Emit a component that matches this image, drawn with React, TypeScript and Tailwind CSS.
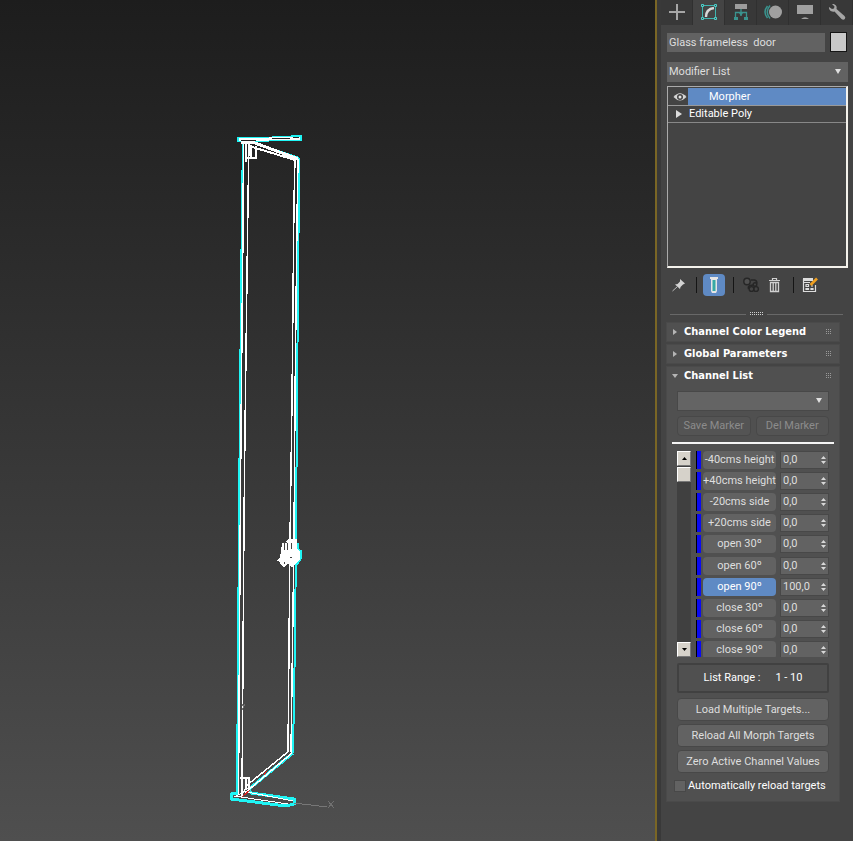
import type { ReactNode } from 'react';
import clsx from 'clsx';

type Channel = { name: string; value: string; active?: boolean };

const CHANNELS: Channel[] = [
  { name: '-40cms height', value: '0,0' },
  { name: '+40cms height', value: '0,0' },
  { name: '-20cms side', value: '0,0' },
  { name: '+20cms side', value: '0,0' },
  { name: 'open 30º', value: '0,0' },
  { name: 'open 60º', value: '0,0' },
  { name: 'open 90º', value: '100,0', active: true },
  { name: 'close 30º', value: '0,0' },
  { name: 'close 60º', value: '0,0' },
  { name: 'close 90º', value: '0,0' },
];

// Wireframe door, drawn in viewport units. Cyan is the selection outline.
function Viewport() {
  return (
    <main aria-label="Viewport" className="min-w-0 flex-1 overflow-hidden bg-linear-to-b from-[#1d1d1d] to-[#4f4f4f]">
      <svg viewBox="0 0 655 841" preserveAspectRatio="xMinYMin meet" className="block w-full" fill="none" shapeRendering="crispEdges">
        <g stroke="#1ff5f5" strokeWidth="2">
          <path d="M243 141 L242 200 L240 400 L239 520 L237 796" />
          <path d="M299 158 L299 180 L297 400 L296 540 L295 640 L293 753" />
          <path d="M252 142 L299 158" />
          <path d="M238 138 L262 138 L301 136 V140 L238 141z" />
          <path d="M293 753 L249 789 L251 793 L294 799 L294 804 L286 806 L231 799 L231 794 L237 793" strokeWidth="3" />
        </g>
        <g stroke="#fff">
          <path d="M243.500 141 L243 230 L241 430 L240 560 L238.500 795" strokeWidth="1.5" />
          <path d="M249 143 L248 200 L245 430 L244 520 L242 796" strokeWidth="1.5" />
          <path d="M295 159 L294 200 L292 400 L290 540 L288 751" strokeWidth="1.5" />
          <path d="M298 159 L297 220 L295 400 L294 540 L291 752" strokeWidth="1.5" />
          <path d="M241 142 L255 143 L298 159" strokeWidth="3" />
          <path d="M249 146 L295 160" strokeWidth="2" />
          <path d="M239 140 L300 138" strokeWidth="3" />
          <path d="M251 145 V158 M256 146 V158 H247 M246 144 V162" strokeWidth="1.5" />
          <path d="M289 751 L246 786 M292 753 L245 793" strokeWidth="1.5" />
          <path d="M242 791 L293 801 M234 796 L288 804 M234 797 L244 792" strokeWidth="1" />
          <path d="M240 778 H249 V788 L244 790 M246 778 V790 M242 776 V797" strokeWidth="1.5" />
        </g>
        <path d="M241 141 L256 140 M272 139 L290 138 M293 137 L299 137" stroke="#222" />
        <path d="M295 544 H298 V550 L301 551 V558 L298 563 L295 565" stroke="#1ff5f5" strokeWidth="2" />
        <path d="M281 551 L282 543 L287 541 L288 539 H297 V549 L300 551 V559 L296 564 L292 567 L288 564 L284 567 L281 565 L280 562 L277 561 L280 557 Z" fill="#fff" />
        <path d="M284 543 V550 M287 543 V550 M291 543 V549 M283 543 L287 542 M284 562 V564 M290 557 H292" stroke="#444" />
        <path d="M242 797 L250 790 M264 775 L267 771" stroke="#e02020" />
        <path d="M294 803 L327 807" stroke="#777" />
        <path d="M328 801 L334 808 M334 801 L328 808 M242 704 L244 707 M245 704 L242 710" stroke="#707070" />
      </svg>
    </main>
  );
}

const TABS: { label: string; icon: ReactNode; active?: boolean }[] = [
  { label: 'Create', icon: <path d="M12 4 V20 M4 12 H20" stroke="#a6a6a6" strokeWidth="2" /> },
  {
    label: 'Modify',
    active: true,
    icon: (
      <>
        <path d="M7 5.5 H17 M7 18.5 H17 M5.5 7 V17 M18.5 7 V17" stroke="#3fb5b0" />
        <path d="M4.5 4.5 h2 v2 h-2z M17.5 4.5 h2 v2 h-2z M4.5 17.5 h2 v2 h-2z M17.5 17.5 h2 v2 h-2z" stroke="#4cd0ca" />
        <path d="M9 17 Q9 9 17 8" stroke="#d8d8d8" strokeWidth="2.4" />
      </>
    ),
  },
  {
    label: 'Hierarchy',
    icon: (
      <>
        <path d="M6 4 H18 V9 H6z" fill="#9c9c9c" />
        <path d="M12 9 V16 M6.500 17 V12.500 H17.500 V17" stroke="#3a948f" strokeWidth="1.3" />
        <path d="M5 17 h4 v3 h-4z M15 17 h4 v3 h-4z M10 13 h4 l-2 3z" fill="#3a948f" />
      </>
    ),
  },
  {
    label: 'Motion',
    icon: (
      <>
        <circle cx="14.5" cy="12" r="6.5" fill="#a0a0a0" />
        <path d="M9 5.500 Q3.500 12 9 18.500 M6.500 6 Q1.500 12 6.500 18" stroke="#3a948f" strokeWidth="1.5" />
      </>
    ),
  },
  { label: 'Display', icon: <path d="M4 5 H20 V14 H4z M8 19 Q12 15.500 16 19z" fill="#a0a0a0" /> },
  {
    label: 'Utilities',
    icon: (
      <path
        d="M4 7 C3.500 10 6.500 12.500 9.500 11.500 L16.500 19 Q18.500 20.500 19.800 19 Q21 17.500 19.500 16 L11.500 9 C12.500 6 10 3.500 7 4 L9.500 6.500 L9 8.500 L7 9 Z"
        fill="#a6a6a6"
      />
    ),
  },
];

function PanelTabs() {
  return (
    <nav aria-label="Command panel" className="flex h-[25px] overflow-hidden bg-[#383838]">
      {TABS.map((tab) => (
        <button
          key={tab.label}
          type="button"
          aria-label={tab.label}
          className={clsx('flex w-8 shrink-0 justify-center border-r border-[#303030]', tab.active && 'bg-[#444]')}
        >
          <svg width="24" height="24" viewBox="0 0 24 24" fill="none">
            {tab.icon}
          </svg>
        </button>
      ))}
    </nav>
  );
}

function ModifierStack() {
  return (
    <ul className="h-[182px] border-t border-r-2 border-b-2 border-l border-t-[#aaa] border-r-[#f4f2ec] border-b-[#f4f2ec] border-l-[#aaa] pt-px text-white">
      <li className="flex h-[18px] border-b border-[#999]">
        <button type="button" aria-label="Toggle Morpher" className="flex w-5 items-center justify-center pl-1">
          <svg width="14" height="10" viewBox="0 0 14 10" fill="none">
            <path d="M.5 5 Q7 -2.500 13.500 5 Q7 12 .5 5z" fill="#d6d6d6" />
            <circle cx="7" cy="5" r="3" fill="#444" />
            <circle cx="7" cy="5" r="1.500" fill="#e5e5e5" />
          </svg>
        </button>
        <button type="button" className="flex flex-1 items-center bg-[#5f8ac4] pl-[21px]">
          Morpher
        </button>
      </li>
      <li className="flex h-[17px] items-center border-b border-[#888]">
        <button type="button" className="flex items-center">
          <span className="flex w-[21px] justify-center">
            <svg width="6" height="8" viewBox="0 0 6 8">
              <path d="M0 0 L6 4 L0 8z" fill="#ddd" />
            </svg>
          </span>
          Editable Poly
        </button>
      </li>
    </ul>
  );
}

function Divider() {
  return <span className="h-4 w-px bg-[#151515]" />;
}

function StackTools() {
  return (
    <div className="mt-[6px] flex h-[22px] items-center">
      <button type="button" aria-label="Pin stack" className="mr-2 ml-1">
        <svg width="17" height="16" viewBox="0 0 17 16" fill="none">
          <path d="M9 2 L14 6.500 L12 7.500 L9.500 10 L9 12 L4 7.500 L6.500 7 L9 4.500z" fill="#d2d2d2" />
          <path d="M6.500 9.500 L1.500 14" stroke="#bbb" />
        </svg>
      </button>
      <Divider />
      <button type="button" aria-label="Show end result" className="mr-2 ml-[6px] flex h-[22px] w-[22px] items-center justify-center rounded-sm bg-[#5f8ac4]">
        <svg width="10" height="18" viewBox="0 0 10 18">
          <path d="M1 1 H9 V3 H8 V15 L7 17 H3 L2 15 V3 H1z" fill="#e5e5e5" />
          <path d="M3.500 4 H6.500 V15 H3.500z" fill="#35aaa5" />
        </svg>
      </button>
      <Divider />
      <button type="button" aria-label="Make unique" className="ml-2">
        <svg width="18" height="18" viewBox="0 0 18 18" fill="none" stroke="#262626" strokeWidth="1.4">
          <circle cx="5" cy="5.5" r="3.200" fill="#505050" />
          <path d="M9 4 H12.500 Q15 4.500 15 7.500 M6.500 13 Q5.500 10.500 8 9.500 L11 9" />
          <circle cx="9.500" cy="13" r="2.400" />
          <circle cx="14" cy="13" r="2.400" />
          <circle cx="13" cy="8.500" r="1.800" />
        </svg>
      </button>
      <button type="button" aria-label="Remove modifier" className="ml-2">
        <svg width="13" height="16" viewBox="0 0 13 16" fill="none" stroke="#d0d0d0">
          <path d="M1 3.500 H12 M4.500 3 V1.500 H8.500 V3" strokeWidth="1.2" />
          <path d="M2.500 5.500 H10.500 V14.500 H2.500z M5.200 6 V14 M7.800 6 V14" strokeWidth="1.3" />
        </svg>
      </button>
      <span className="w-3" />
      <Divider />
      <button type="button" aria-label="Configure modifier sets" className="ml-[7px]">
        <svg width="18" height="18" viewBox="0 0 18 18" fill="none">
          <path d="M2 2 H12 V5 H2z" fill="#ddd" />
          <path d="M2.500 3 V15.500 H14.500 V9 M2.500 6.500 H9 M5 8.500 h2.500 v2 h-2.500z M5 12.500 h2.500 v1 h-2.500z M10 12.500 h2 v1 h-2z M10 10 h2" stroke="#ddd" strokeWidth="1.2" />
          <path d="M16 2.500 L9.500 9" stroke="#f0a020" strokeWidth="2.600" />
        </svg>
      </button>
    </div>
  );
}

function Grip() {
  return (
    <svg width="6" height="6" viewBox="0 0 6 6" fill="none" shapeRendering="crispEdges" aria-hidden="true">
      <path d="M0 .5 H6 M0 2.500 H6 M0 4.500 H6" stroke="#999" strokeDasharray="1 1" />
    </svg>
  );
}

function Rollout({ title, open = false, children }: { title: string; open?: boolean; children?: ReactNode }) {
  return (
    <section className="border border-[#4a4a4a] bg-[#505050]">
      <button type="button" aria-expanded={open} className="flex h-[18px] w-full items-center pr-[7px] pl-[5px] font-bold text-white">
        <svg width="6" height="6" viewBox="0 0 6 6" aria-hidden="true">
          <path d={open ? 'M0 1 H6 L3 5z' : 'M1 0 L5 3 L1 6z'} fill="#b5b5b5" />
        </svg>
        <span className="ml-[6px] flex-1 text-left font-['DejaVu_Sans_Condensed','Noto_Sans',sans-serif]">{title}</span>
        <Grip />
      </button>
      {children}
    </section>
  );
}

function Caret() {
  return (
    <svg width="6" height="5" viewBox="0 0 6 5" className="pointer-events-none absolute top-[7px] right-[7px]" aria-hidden="true">
      <path d="M0 0 H6 L3 5z" fill="#e0e0e0" />
    </svg>
  );
}

function ChannelRow({ name, value, active }: Channel) {
  return (
    <div className="flex h-[18px] shrink-0">
      <span className="w-[5px] border-l border-black bg-[#0b0bf0]" />
      <button
        type="button"
        className={clsx('ml-[2px] w-[73px] rounded-sm text-center whitespace-nowrap', active ? 'bg-[#5f8ac4] text-white' : 'bg-[#626262]')}
      >
        {name}
      </button>
      <label className="ml-1 flex min-w-0 flex-1 items-center border border-[#484848] bg-[#626262] pr-[2px]">
        <input aria-label={`${name} value`} defaultValue={value} className="w-0 min-w-0 flex-1 bg-transparent pl-[2px] outline-none" />
        <svg width="5" height="8" viewBox="0 0 5 8" aria-hidden="true">
          <path d="M0 3 L2.500 0 L5 3z M0 5 H5 L2.500 8z" fill="#d8d8d8" />
        </svg>
      </label>
    </div>
  );
}

function ScrollButton({ label, path }: { label: string; path: string }) {
  return (
    <button
      type="button"
      aria-label={label}
      className="flex h-[15px] items-center justify-center border border-t-white border-r-[#777] border-b-[#777] border-l-white bg-[#d6d2ca]"
    >
      <svg width="5" height="3" viewBox="0 0 5 3">
        <path d={path} fill="#000" />
      </svg>
    </button>
  );
}

function WideButton({ children }: { children: ReactNode }) {
  return (
    <button type="button" className="h-[23px] w-full rounded-sm border border-[#484848] bg-[#626262] whitespace-nowrap">
      {children}
    </button>
  );
}

function ChannelList() {
  return (
    <div className="px-[5px] pt-[6px] pb-2">
      <div className="px-[5px]">
        <div className="relative">
          <select aria-label="Marker" className="block h-5 w-full appearance-none border border-[#484848] bg-[#646464]" />
          <Caret />
        </div>
        <div className="mt-[5px] flex gap-[5px]">
          <button type="button" disabled className="h-5 flex-1 rounded-sm border border-[#484848] bg-[#545454] whitespace-nowrap text-[#8c8c8c]">
            Save Marker
          </button>
          <button type="button" disabled className="h-5 flex-1 rounded-sm border border-[#484848] bg-[#545454] whitespace-nowrap text-[#8c8c8c]">
            Del Marker
          </button>
        </div>
      </div>
      <hr className="mt-[6px] border-t-2 border-[#f4f4f4]" />
      <div className="px-[5px] pt-[7px]">
        <div className="flex h-[206px] overflow-hidden">
          <div className="mr-[5px] flex w-[14px] flex-col bg-[#404040]">
            <ScrollButton label="Scroll up" path="M0 3 L2.500 0 L5 3z" />
            <span className="mt-px h-[15px] border border-t-white border-r-[#777] border-b-[#777] border-l-white bg-[#d6d2ca]" />
            <span className="flex-1" />
            <ScrollButton label="Scroll down" path="M0 0 H5 L2.500 3z" />
          </div>
          {/* taller than its window, so the last row is cut at the bottom */}
          <div className="flex h-[208px] min-w-0 flex-1 flex-col justify-between">
            {CHANNELS.map((channel) => (
              <ChannelRow key={channel.name} {...channel} />
            ))}
          </div>
        </div>
        <div className="mt-[6px] flex h-[30px] items-center justify-center gap-[15px] rounded-xs border-2 border-[#414141] text-white">
          <span>List Range :</span>
          <span>1 - 10</span>
        </div>
        <div className="mt-[5px] flex flex-col gap-[3px]">
          <WideButton>Load Multiple Targets...</WideButton>
          <WideButton>Reload All Morph Targets</WideButton>
          <WideButton>Zero Active Channel Values</WideButton>
        </div>
      </div>
      <label className="mt-[6px] ml-[2px] flex h-[14px] items-center gap-[2px] whitespace-nowrap text-white">
        <input type="checkbox" className="size-3 shrink-0 appearance-none border border-[#484848] bg-[#626262]" />
        Automatically reload targets
      </label>
    </div>
  );
}

export default function App() {
  return (
    <div className="flex min-h-screen bg-[#444] font-[Roboto,'Noto_Sans',sans-serif] text-[11px] leading-[14px] text-[#dedede]">
      <Viewport />
      <aside className="w-[198px] shrink-0 border-l-2 border-[#7a6625]">
        <div className="min-h-screen border-l-4 border-[#393939]">
          <PanelTabs />
          <div className="pt-[7px] pr-[5px] pl-[5px]">
            <div className="pl-px">
              <div className="flex h-5 items-center gap-[5px] pr-px">
                <input aria-label="Object name" defaultValue="Glass frameless  door" className="h-[19px] min-w-0 flex-1 bg-[#626262] pl-[2px] outline-none" />
                <button type="button" aria-label="Object color" className="h-5 w-[17px] border border-[#151515] bg-[#c9c9c9]" />
              </div>
              <div className="relative mt-[10px]">
                <select aria-label="Modifier List" className="block h-5 w-full appearance-none bg-[#626262] pl-[2px] outline-none">
                  <option>Modifier List</option>
                </select>
                <Caret />
              </div>
              <div className="mt-1">
                <ModifierStack />
              </div>
              <StackTools />
            </div>
            <div className="mt-4 flex items-center gap-1 pr-[5px] pl-1">
              <span className="h-px flex-1 bg-[#686868]" />
              <svg width="13" height="4" viewBox="0 0 13 4" fill="none" shapeRendering="crispEdges">
                <path d="M0 .5 H13 M0 2.500 H13" stroke="#d0d0d0" strokeDasharray="1 1" />
              </svg>
              <span className="h-px flex-1 bg-[#686868]" />
            </div>
            <div className="mt-[6px] mr-2 flex flex-col gap-[2px]">
              <Rollout title="Channel Color Legend" />
              <Rollout title="Global Parameters" />
              <Rollout title="Channel List" open>
                <ChannelList />
              </Rollout>
            </div>
          </div>
        </div>
      </aside>
    </div>
  );
}
